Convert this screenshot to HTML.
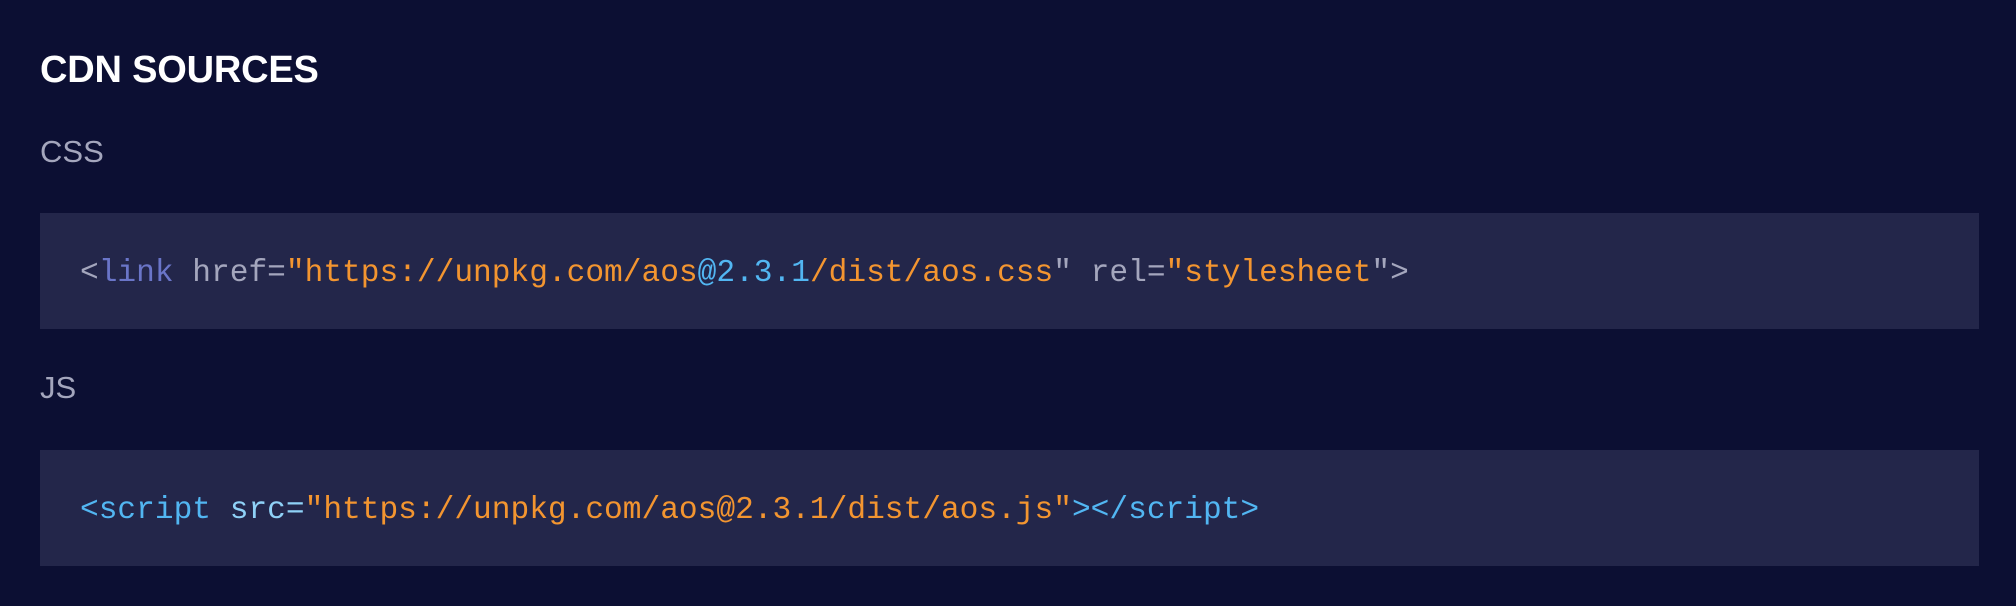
<!DOCTYPE html>
<html><head><style>
html,body{margin:0;padding:0;}
body{width:2016px;height:606px;background:#0c0f33;font-family:"Liberation Sans",sans-serif;position:relative;overflow:hidden;}
h2{position:absolute;left:40px;top:48px;margin:0;font-size:38px;line-height:44px;font-weight:bold;color:#fff;letter-spacing:-0.2px;}
.lab{position:absolute;left:40px;margin:0;font-size:31px;line-height:36px;color:#a4a6bd;}
.box{position:absolute;left:40px;width:1939px;height:116px;background:#23264a;}
.code{position:absolute;left:80px;font-family:"Liberation Mono",monospace;font-size:31.2px;line-height:36px;white-space:pre;color:#a4a6bd;}
.o{color:#f39530}.b{color:#52b6f2}.p{color:#6a75c8}.lb{color:#8fd1f7}
</style></head><body>
<h2>CDN SOURCES</h2>
<div class="lab" style="top:134px">CSS</div>
<div class="box" style="top:213px"></div>
<div class="code" style="top:256px">&lt;<span class="p">link</span> href=<span class="o">"https://unpkg.com/aos</span><span class="b">@2.3.1</span><span class="o">/dist/aos.css</span>" rel=<span class="o">"stylesheet</span>"&gt;</div>
<div class="lab" style="top:370px">JS</div>
<div class="box" style="top:450px"></div>
<div class="code" style="top:493px"><span class="b">&lt;script</span> <span class="lb">src=</span><span class="o">"https://unpkg.com/aos@2.3.1/dist/aos.js"</span><span class="b">&gt;&lt;/script&gt;</span></div>
</body></html>
